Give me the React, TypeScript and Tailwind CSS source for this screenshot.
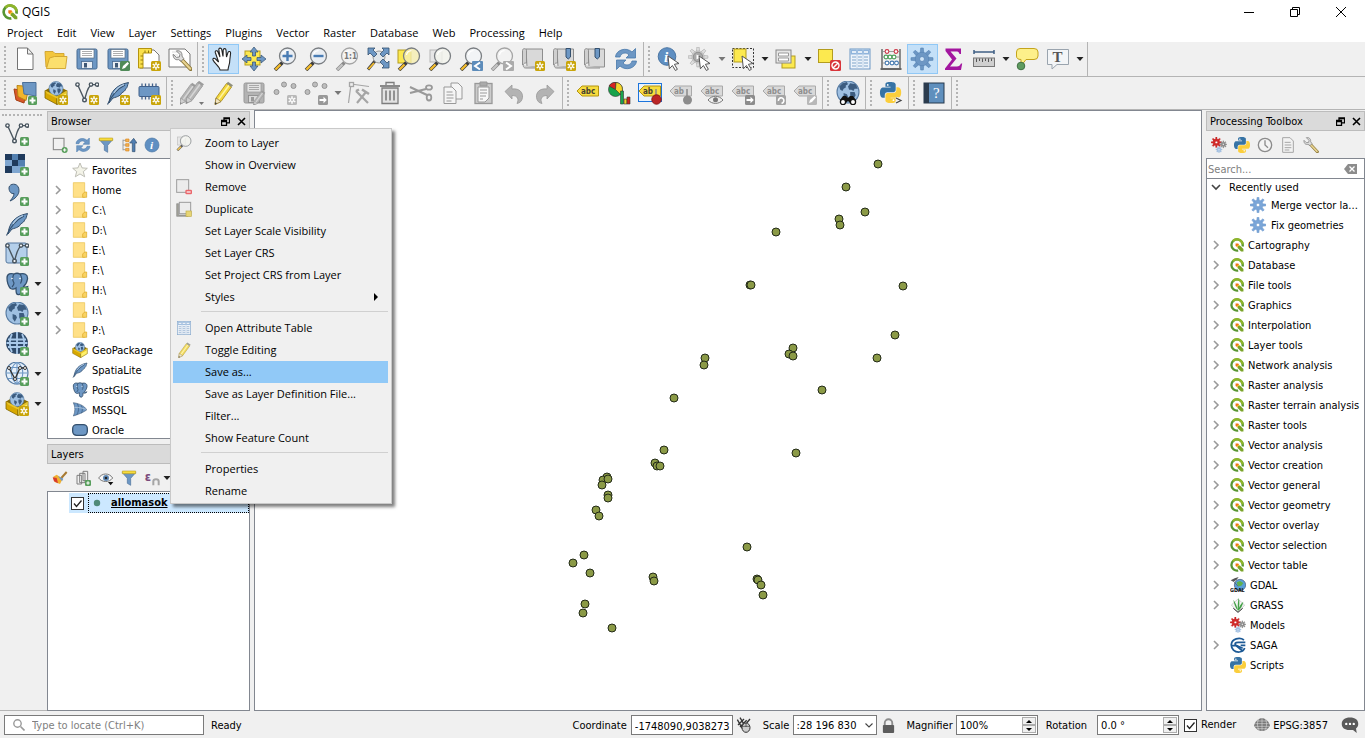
import React from 'react';
import type { ReactNode } from 'react';

const uiFont = "font-['DejaVu_Sans_Condensed','DejaVu_Sans',sans-serif]";
const menuFont = "font-['Open_Sans','Noto_Sans',sans-serif]";

/* ---------- icon building blocks, all drawn on a 24 x 24 grid ---------- */

function Svg({ children, className = 'size-6' }: { children: ReactNode; className?: string }) {
  return (
    <svg viewBox="0 0 24 24" className={`${className} shrink-0`} fill="none" aria-hidden="true">
      {children}
    </svg>
  );
}

const BLUE = '#6d97c4';
const NAVY = '#34506e';

function PlusBadge() {
  return (
    <g>
      <rect x="15" y="15" width="9" height="9" rx="1.5" fill="#589e5c" />
      <path d="M19.5 16.5v6M16.5 19.5h6" stroke="#fff" strokeWidth="2" />
    </g>
  );
}

function StarBadge({ fill = '#c9a50a' }: { fill?: string }) {
  return (
    <g>
      <rect x="14" y="14" width="10" height="10" rx="1.5" fill={fill} />
      <path d="M19 15.2v7.600M15.700 17.100l6.600 3.800M22.300 17.100l-6.600 3.800" stroke="#fff" strokeWidth="1.5" />
      <circle cx="19" cy="19" r="1" fill={fill} />
    </g>
  );
}

function ArrowBadge({ fill = '#8c8c8c' }: { fill?: string }) {
  return (
    <g>
      <rect x="14" y="14" width="10" height="10" rx="1.5" fill={fill} />
      <path d="M15.5 18h4v-2.2l3.3 3.2-3.3 3.2V20h-4z" fill="#fff" />
    </g>
  );
}

function Cursor() {
  return <path d="M11 9l11 7.5-4.6.8 3 5-2 1.2-3-5-3 3.3z" fill="#fff" stroke="#555" strokeWidth="1" />;
}

function Magnifier({ gray = false, glass = '#e8eef4' }: { gray?: boolean; glass?: string }) {
  return (
    <g>
      <path d="M9.5 15.500L2 23" stroke={gray ? '#8a8a8a' : '#3c3c3c'} strokeWidth="3.6" />
      <path d="M7.500 17.500l-5.100 5.100" stroke={gray ? '#c4c4c4' : '#f5bd2c'} strokeWidth="2.200" />
      <circle cx="14.5" cy="9" r="8" fill={glass} fillOpacity=".8" stroke={gray ? '#a4a4a4' : '#7a7e82'} strokeWidth="1.3" />
      <path d="M9.5 8a5.4 5.4 0 0 1 5-4.4" stroke="#fff" strokeWidth="1.2" />
    </g>
  );
}

function Gear({ cx = 12, cy = 12, r = 7, fill = BLUE, stroke = '#5683b4', hole = '#cfe4f7' }: { cx?: number; cy?: number; r?: number; fill?: string; stroke?: string; hole?: string }) {
  return (
    <g transform={`translate(${cx} ${cy}) scale(${r / 7})`}>
      {[0, 45, 90, 135, 180, 225, 270, 315].map((a) => (
        <path key={a} transform={`rotate(${a})`} d="M-1.8 -6L-1.300 -11h2.600L1.8 -6z" fill={fill} stroke={stroke} strokeWidth=".6" />
      ))}
      <circle r="6.800" fill={fill} stroke={stroke} strokeWidth=".6" />
      <circle r="2.500" fill={hole} stroke={stroke} strokeWidth=".8" />
    </g>
  );
}

function Pencil({ gray = false }: { gray?: boolean }) {
  return (
    <g>
      <path d="M5 17L15.500 2.500l5 3.500L10 20.500l-6 3z" fill={gray ? '#b4b4b4' : '#f3d83c'} stroke={gray ? '#9a9a9a' : '#b09020'} strokeWidth=".9" />
      <path d="M7.500 18.600L18 4.200" stroke={gray ? '#d6d6d6' : '#fff3a0'} strokeWidth="1.600" />
      <path d="M15.500 2.500L17 .8l5 3.400L20.500 6z" fill={gray ? '#9c9c9c' : '#8f8f7c'} />
      <path d="M5 17l5 3.500-6 3z" fill={gray ? '#d0d0d0' : '#f4e6c0'} stroke={gray ? '#9a9a9a' : '#86733a'} strokeWidth=".7" />
      <path d="M4.400 21l1.600 1.400L4 23.500z" fill={gray ? '#888' : '#333'} />
    </g>
  );
}

function Feather() {
  return (
    <g>
      <path d="M3 22C4 12 9 4 22.500 1.500C21 5 22 6 19.500 8c.5 1-2 3-4 4c0 2-4 4-8.500 5z" fill={BLUE} stroke={NAVY} strokeWidth="1" />
      <path d="M1.500 23.500C5 16 11 8 19 4" stroke={NAVY} strokeWidth="1.100" />
      <path d="M8 12C11 7 14 5 18 3.600" stroke="#b4cce4" strokeWidth="1.200" />
    </g>
  );
}

function Globe({ cx = 12, cy = 12, r = 10, grid = false }: { cx?: number; cy?: number; r?: number; grid?: boolean }) {
  return (
    <g transform={`translate(${cx} ${cy}) scale(${r / 10})`}>
      <circle r="10" fill={grid ? '#e6f0fa' : '#9fc0e2'} stroke="#587ca3" strokeWidth="1" />
      {grid ? (
        <path d="M-10 0h20M0-10v20M-8.500-5h17M-8.500 5h17M0-10c-7 5-7 15 0 20c7-5 7-15 0-20" stroke="#6d97c4" strokeWidth="1" />
      ) : (
        <path d="M-8-5l3-3 4-1 1 2-2 1 0 2-2 1-1 2-2-1zM-4 1l3 1 1 2-2 4-2-3zM2-8l5 1 2 4-3 0-1 2-2-1-2 0-1-3zM2 0l4 0 1 3-3 5-2-4z" fill="#3c5c80" />
      )}
    </g>
  );
}

function GeoBox() {
  return (
    <g>
      <path d="M1 9.500l10-6 12 6-10 6z" fill="#8a6d00" />
      <path d="M1 9.500l12 6v8L1 17z" fill="#d8a800" stroke="#806600" strokeWidth=".8" />
      <path d="M13 15.500l10-6v8l-10 6z" fill="#fff06a" stroke="#806600" strokeWidth=".8" />
      <Globe cx={12} cy={7.500} r={7} />
      <path d="M1 9.500l12 6 10-6-1 3-9 5-10-5z" fill="#e9c52a" />
    </g>
  );
}

function VectorLine({ color = '#4a5660' }: { color?: string }) {
  return (
    <g stroke={color} strokeWidth="1.400">
      <path d="M3 4.500L9.500 19C11 15 12 5 17 3.600h4.500" />
      <circle cx="2.500" cy="3.600" r="1.700" fill="#fff" />
      <circle cx="16" cy="3.600" r="1.700" fill="#fff" />
      <circle cx="22" cy="3.600" r="1.700" fill="#fff" />
      <circle cx="9.500" cy="19" r="1.800" fill="#fff" />
    </g>
  );
}

function Elephant() {
  return (
    <g>
      <path d="M2 6C2 1.500 6 1 9 2c2-1 4-1 6 0c4-1 8 0 7.500 5c-.5 3-2 6-4 7.500c1 1 3 .5 4 .2c-1 2-4 2.500-6 1.500c0 3 0 6-2.500 6.500C11 23 11 20 11 16c-2 1.500-3.500 1.500-5.500.5C3 13.500 2 9 2 6z" fill={BLUE} stroke={NAVY} strokeWidth="1.300" />
      <path d="M9 2c-2 3-1.500 7 0 9c0 2-1 3-2 4M15 2c2 3 2 7 .5 9.500" stroke={NAVY} strokeWidth="1.200" />
      <circle cx="7" cy="6.500" r=".8" fill="#fff" />
      <circle cx="15" cy="6.500" r=".8" fill="#fff" />
    </g>
  );
}

function Python() {
  return (
    <g>
      <path fill="#3673a5" d="M14.25.18l.9.2.73.26.59.3.45.32.34.34.25.34.16.33.1.3.04.26.02.2-.01.13V8.500l-.05.63-.13.55-.21.46-.26.38-.3.31-.33.25-.35.19-.35.14-.33.1-.3.07-.26.04-.21.02H8.77l-.69.05-.59.14-.5.22-.41.27-.33.32-.27.35-.2.36-.15.37-.1.35-.07.32-.04.27-.02.21v3.060H3.170l-.21-.03-.28-.07-.32-.12-.35-.18-.36-.26-.36-.36-.35-.46-.32-.59-.28-.73-.21-.88-.14-1.050-.05-1.230.06-1.220.16-1.040.24-.87.32-.71.36-.57.4-.44.42-.33.42-.24.4-.16.36-.1.32-.05.24-.01h.16l.06.01h8.160v-.83H6.180l-.01-2.750-.02-.37.05-.34.11-.31.17-.28.25-.26.31-.23.38-.2.44-.18.51-.15.58-.12.64-.1.71-.06.77-.04.84-.02 1.270.05z" />
      <path fill="#fbce3c" d="M21.04 6.110l.28.06.32.12.35.18.36.27.36.35.35.47.32.59.28.73.21.88.14 1.040.05 1.230-.06 1.230-.16 1.040-.24.86-.32.71-.36.57-.4.45-.42.33-.42.24-.4.16-.36.09-.32.05-.24.02-.16-.01h-8.220v.82h5.840l.01 2.760.02.36-.05.34-.11.31-.17.29-.25.25-.31.24-.38.2-.44.17-.51.15-.58.13-.64.09-.71.07-.77.04-.84.01-1.270-.04-1.070-.14-.9-.2-.73-.25-.59-.3-.45-.33-.34-.34-.25-.34-.16-.33-.1-.3-.04-.25-.02-.2.01-.13v-5.340l.05-.64.13-.54.21-.46.26-.38.3-.32.33-.24.35-.2.35-.14.33-.1.3-.06.26-.04.21-.02.13-.01h5.840l.69-.05.59-.14.5-.21.41-.28.33-.32.27-.35.2-.36.15-.36.1-.35.07-.32.04-.28.02-.21V6.070h2.090z" />
      <circle cx="8.800" cy="3.400" r="1" fill="#fff" />
      <circle cx="15.300" cy="20.600" r="1" fill="#fff" />
    </g>
  );
}

function QLogo() {
  return (
    <g>
      <path d="M21.500 14.500A9.700 9.700 0 1 0 14 21.500" stroke="#589632" strokeWidth="4" />
      <path d="M21.700 11A9.700 9.700 0 0 0 5 5.300" stroke="#8fb52b" strokeWidth="4" />
      <path d="M13 13h4l6 6v4h-4l-6-6z" fill="#7ba428" />
      <path d="M9.500 9.500h4.500l1.500 1.500-4 4-2-1.500z" fill="#ee7913" />
      <path d="M11.500 14.500l3.500-3.500 2 2h-2l-1.500 1.500v2z" fill="#f5c22c" />
    </g>
  );
}

function Tag({ gray = false, text = 'abc' }: { gray?: boolean; text?: string }) {
  return (
    <g>
      <path d="M6 5h16.500v10H6L1 10z" fill={gray ? '#d9d9d9' : '#f7dc3e'} stroke={gray ? '#a9a9a9' : '#b4940f'} strokeWidth="1" />
      <text x="5" y="13" fontSize="8" fontWeight="bold" fontFamily="DejaVu Sans Condensed, sans-serif" fill={gray ? '#8e8e8e' : '#454131'}>
        {text}
      </text>
    </g>
  );
}

function Scroll() {
  return (
    <g stroke="#8e8e8e" strokeWidth="1">
      <path d="M5 2h16.500v18H6z" fill="#d9d9d9" />
      <path d="M1.500 18V3.500c0-2.500 4-2.500 4 0V16H4.500c-3 0-3 5 0 5H17" fill="#cfcfcf" />
    </g>
  );
}

function Bookmark({ x }: { x: number }) {
  return <path d={`M${x} 1.500h4.500v8.500l-2.250 2-2.250-2z`} fill={BLUE} stroke={NAVY} strokeWidth="1" />;
}

function Floppy({ gray = false }: { gray?: boolean }) {
  return (
    <g>
      <rect x="2" y="2" width="20" height="20" rx="1.500" fill={gray ? '#b3b3b3' : BLUE} stroke={gray ? '#999' : '#476a92'} />
      <rect x="5" y="2.500" width="14" height="8.500" fill={gray ? '#e3e3e3' : '#fff'} stroke={gray ? '#999' : '#5c6f84'} strokeWidth=".7" />
      <path d="M7 4.500h10M7 6.500h10M7 8.500h10" stroke="#999" strokeWidth=".8" />
      <rect x="6.500" y="14.500" width="11" height="7" fill={gray ? '#d9d9d9' : '#e9eef4'} stroke={gray ? '#888' : '#476a92'} strokeWidth=".8" />
      <rect x="9" y="16" width="3" height="4.500" fill={gray ? '#999' : '#3f5876'} />
    </g>
  );
}

function Refresh() {
  return (
    <g fill={BLUE} stroke="#4878ab" strokeWidth=".8">
      <path d="M1.500 10C2 3 12-.5 18 5l3.500-3.500V11H12l3-3c-3-3.500-8-2-9 2z" />
      <path d="M22.500 14C22 21 12 24.500 6 19l-3.500 3.500V13H12l-3 3c3 3.500 8 2 9-2z" />
    </g>
  );
}

function Gears() {
  return (
    <g>
      <Gear cx={8} cy={8} r={5} fill="#d42a2a" stroke="#b41818" hole="#fff" />
      <Gear cx={18.500} cy={11} r={3.400} fill="#8c8c8c" stroke="#777" hole="#fff" />
      <Gear cx={12} cy={19} r={3} fill="#9fbfe4" stroke="#86a8d0" hole="#fff" />
    </g>
  );
}

function Table() {
  return (
    <g>
      <rect x="2" y="2" width="20" height="20" fill="#eef4fb" stroke="#6d97c4" />
      <rect x="2.500" y="2.500" width="19" height="5" fill="#8fb4dc" />
      <path d="M4 5h4M10 5h4M16 5h4" stroke="#fff" strokeWidth="1.500" />
      <path d="M4 10h4M10 10h4M16 10h4M4 13h4M10 13h4M16 13h4M4 16h4M10 16h4M16 16h4M4 19h4M10 19h4M16 19h4" stroke="#7fa3ca" strokeWidth="1.200" />
      <path d="M9 2v20M15 2v20" stroke="#b3cbe4" strokeWidth=".8" />
    </g>
  );
}

function Wrench() {
  return (
    <g>
      <path d="M11 11l10.500 11" stroke="#8b7637" strokeWidth="4.500" strokeLinecap="round" />
      <path d="M12 12l9 9.500" stroke="#e8d390" strokeWidth="2.500" strokeLinecap="round" />
      <path d="M5 1c4-1 7 2 6.500 6l2 3-3 3-3-2C3.500 12 1 9 1.500 5l3.500 3.500L8.500 8l.5-3z" fill="#ddd" stroke="#777" strokeWidth="1" />
    </g>
  );
}

function Funnel() {
  return (
    <g>
      <path d="M2 4h20l-7.500 8.500V23l-5-3v-7.500z" fill={BLUE} stroke="#4c719b" />
      <path d="M2 1.500h20v4H2z" fill="#f7dc3e" stroke="#b4940f" strokeWidth=".8" />
    </g>
  );
}

function Star() {
  return <path d="M12 1.500l3 7.300 8 .6-6 5 2 7.800-7-4.300-7 4.300 2-7.800-6-5 8-.6z" fill="#f3f3e8" stroke="#b5b5ac" strokeWidth="1.300" />;
}

function Dots() {
  return (
    <g fill="#bdbdbd" stroke="#8f8f8f" strokeWidth=".9">
      <circle cx="3.500" cy="11" r="2.500" />
      <circle cx="11" cy="3.500" r="2.500" />
      <circle cx="20.500" cy="5" r="2.500" />
    </g>
  );
}

const icons: Record<string, ReactNode> = {
  new: <path d="M4.500 1h10l5.500 6v15.500H4.500zM14.500 1v6H20" fill="#fff" stroke="#737373" />,
  open: (
    <g stroke="#cfa22b" strokeWidth=".9">
      <path d="M1 4.500h8l2 2h9V20H2z" fill="#f3c63c" />
      <path d="M2.500 21.500L5.500 11l5-1.500H23L21.500 21.500z" fill="#fbdf6d" />
    </g>
  ),
  save: <Floppy />,
  saveAs: (
    <g>
      <Floppy />
      <rect x="14" y="14" width="10" height="10" rx="1.500" fill="#4f8a58" />
      <path d="M16 22l1-3 4.500-4 1.500 1.500-4 4.500z" fill="#fff" />
    </g>
  ),
  layout: (
    <g>
      <path d="M3 3h14l5 5v13H3z" fill="#fff" stroke="#777" />
      <path d="M1.500 1.500h13v4.500H6v15H1.500z" fill="#fae04c" stroke="#b4940f" />
      <path d="M8 3.500v2.500M11.500 3.500v2.500M3.500 9H6M3.500 13H6M3.500 17H6" stroke="#947a10" />
      <StarBadge />
    </g>
  ),
  layoutManager: (
    <g>
      <path d="M1 2h16l5 5v13H1z" fill="#fff" stroke="#777" />
      <path d="M4 5h10M4 8h6" stroke="#ddd" />
      <g transform="translate(4 3) scale(.87)"><Wrench /></g>
    </g>
  ),
  hand: (
    <path d="M9 23c-.5-3.500-5.500-6.500-7-10c-.6-1.700 1.400-2.300 2.600-1l3 3L4.300 5.500C3.800 3.600 6.200 3 6.900 4.800L9 10L7.800 2.700C7.600.7 10.200.5 10.700 2.400L12 9.500L12.200 3c.2-1.900 2.700-1.800 2.800 0l.5 7l1.500-4.600c.7-1.600 2.800-1 2.600.8L18.800 13c0 4.500-1.500 6-1.800 10z" fill="#fff" stroke="#222" strokeWidth="1.100" />
  ),
  panSelection: (
    <g>
      <rect x="3" y="4" width="15" height="14" fill="#fce94f" stroke="#b39c1e" />
      <path d="M12 0l4 5h-2.500v4h-3V5H8zM12 24l-4-5h2.500v-4h3v4H16zM0 12l5-4v2.500h4v3H5V16zM24 12l-5 4v-2.500h-4v-3h4V8z" fill={BLUE} stroke={NAVY} strokeWidth=".7" />
    </g>
  ),
  zoomIn: (<g><Magnifier /><path d="M14.500 4v10M9.500 9h10" stroke="#497cb4" strokeWidth="2.400" /></g>),
  zoomOut: (<g><Magnifier /><path d="M9.500 9h10" stroke="#497cb4" strokeWidth="2.400" /></g>),
  zoomNative: (
    <g><Magnifier gray glass="#f3f3f3" />
      <text x="9" y="12" fontSize="8" fontWeight="bold" fontFamily="DejaVu Sans Condensed, sans-serif" fill="#777">1:1</text>
    </g>
  ),
  zoomFull: (
    <g><path d="M9 14L2 22.500" stroke="#444" strokeWidth="3" /><path d="M8 16l-5.500 6" stroke="#f5bd2c" strokeWidth="1.800" />
      <circle cx="13" cy="10" r="6" fill="#dfe5ea" stroke="#999" />
      <path d="M2 1h7L7 3l4 4-3 3-4-4-2 2zM23 1h-7l2 2-4 4 3 3 4-4 2 2zM23 21h-7l2-2-4-4 3-3 4 4 2-2z" fill={BLUE} stroke={NAVY} strokeWidth=".8" />
    </g>
  ),
  zoomSelection: (<g><rect x="1" y="3" width="13" height="13" fill="#fce94f" stroke="#b39c1e" /><Magnifier glass="#f6efb0" /></g>),
  zoomLayer: (<g><rect x="2" y="3" width="12" height="12" fill="#e6e6e6" stroke="#b5b5b5" /><Magnifier glass="#f4f5ee" /></g>),
  zoomLast: (<g><Magnifier glass="#f3f5f7" /><rect x="13" y="14" width="11" height="10" rx="1" fill="#5d8cba" /><path d="M21 15.500L16 19l5 3.500" stroke="#fff" strokeWidth="2" /></g>),
  zoomNext: (<g><Magnifier gray glass="#f3f3f3" /><rect x="13" y="14" width="11" height="10" rx="1" fill="#ababab" /><path d="M16 15.500l5 3.500-5 3.500" stroke="#fff" strokeWidth="2" /></g>),
  mapView: (<g><Scroll /><StarBadge /></g>),
  newBookmark: (<g><Scroll /><Bookmark x={14} /><StarBadge /></g>),
  bookmarks: (<g><Scroll /><Bookmark x={12} /></g>),
  refresh: <Refresh />,
  identify: (
    <g><circle cx="10" cy="9.500" r="8.800" fill="#5f8fc2" stroke="#4a75a3" />
      <text x="7" y="15" fontSize="15" fontStyle="italic" fontWeight="bold" fontFamily="Liberation Serif, serif" fill="#fff">i</text>
      <Cursor />
    </g>
  ),
  action: (<g><Gear cx={10} cy={10} r={6.300} fill="#dedede" stroke="#a2a2a2" hole="#cfcfcf" /><circle cx="10" cy="10" r="4.800" fill="#a8a8a8" stroke="#8c8c8c" /><path d="M8.500 7.500l4.500 2.500-4.500 2.500z" fill="#fff" /><Cursor /></g>),
  select: (<g><rect x="1.500" y="1.500" width="21" height="19" stroke="#333" strokeDasharray="2 1.500" /><rect x="3" y="2" width="12" height="13" fill="#fce94f" stroke="#b39c1e" /><Cursor /></g>),
  selectForm: (<g><rect x="8" y="9" width="13" height="12" fill="#fce94f" stroke="#b39c1e" /><rect x="2" y="3" width="15" height="13" fill="#e7e7e7" stroke="#888" /><path d="M4.500 6h10v3h-10zM4.500 11h10v3h-10z" fill="#fff" stroke="#999" /></g>),
  deselect: (<g><rect x="1.500" y="2.500" width="14" height="13" fill="#fce94f" stroke="#b39c1e" /><rect x="13" y="13" width="11" height="11" rx="1.500" fill="#d8343a" /><circle cx="18.500" cy="18.500" r="3.500" stroke="#fff" strokeWidth="1.400" /><path d="M16 21l5-5" stroke="#fff" strokeWidth="1.400" /></g>),
  table: <Table />,
  abacus: (
    <g><path d="M3 2v19M21 2v19" stroke="#555" strokeWidth="1.300" /><path d="M1.500 22h21" stroke="#666" strokeWidth="2" /><path d="M3 4.500h18M3 10h18M3 16h18" stroke="#888" strokeWidth=".8" />
      <g fill="#fff" strokeWidth="1.100"><g stroke="#cc3344"><circle cx="8" cy="4.500" r="1.900" /><circle cx="17" cy="4.500" r="1.900" /></g><g stroke="#4e9e5a"><circle cx="7" cy="10" r="1.900" /><circle cx="11" cy="10" r="1.900" /><circle cx="15" cy="10" r="1.900" /></g><g stroke="#477ab0"><circle cx="8" cy="16" r="1.900" /><circle cx="13" cy="16" r="1.900" /><circle cx="17.500" cy="16" r="1.900" /></g></g>
    </g>
  ),
  gear: <Gear />,
  sigma: <path d="M4.500 1.500h15.500v5.500h-1.500c-.5-2-1.500-2.500-3.500-2.500H9.500l6 7-6.500 8h7c2 0 3-1 4-3h1.200L20 23H4v-1.500l7-9L4.500 4z" fill="#a3169f" />,
  measure: (<g><path d="M2 5h20M2 3v4M22 3v4" stroke="#3f5f84" strokeWidth="1.500" /><rect x="1.500" y="11" width="21" height="8.500" fill="#cfcfcf" stroke="#777" /><path d="M4.500 11.500v3.500M7.500 11.500v2.500M10.500 11.500v3.500M13.500 11.500v2.500M16.500 11.500v3.500M19.500 11.500v2.500" stroke="#555" /></g>),
  tips: (<g><path d="M5 1.500h14q4 0 4 3.500v4q0 3.500-4 3.500h-8L6 19v-6.500Q1.500 12.500 1.500 9V5Q1.500 1.500 5 1.500z" fill="#fdf08a" stroke="#c4a41c" /><circle cx="6" cy="19" r="3.800" fill="#5f9b60" stroke="#407043" /></g>),
  textAnno: (<g><path d="M1.500 2.500h21v15H11L6 22v-4.500H1.500z" fill="#f3f5f7" stroke="#9aa4ae" /><text x="6.500" y="15" fontSize="15" fontWeight="bold" fontFamily="Liberation Serif, serif" fill="#555">T</text></g>),
  dataSource: (<g><path d="M1 8l12 2-2 12-8-3z" fill="#da5a28" stroke="#a33d14" /><path d="M4 4.500l12 1-3 14-8-4z" fill="#f2b52c" stroke="#b88414" /><path d="M9.500 1.500h13.500v13.500l-12-2z" fill={BLUE} stroke="#4b6f97" /><PlusBadge /></g>),
  newGpkg: (<g><GeoBox /><StarBadge /></g>),
  newShape: (<g><VectorLine /><StarBadge /></g>),
  newSpatialite: (<g><Feather /><StarBadge /></g>),
  newMem: (<g><path d="M5 2.500v16M8.500 2.500v16M12 2.500v16M15.500 2.500v16M19 2.500v16" stroke="#41608a" strokeWidth="1.300" /><rect x="2" y="5.500" width="20" height="10" rx="1" fill={BLUE} stroke="#41608a" /><StarBadge /></g>),
  edits: (<g><g transform="translate(-4 1) scale(.95)"><Pencil gray /></g><g transform="translate(2 -1)"><Pencil gray /></g><path d="M19 21h5l-2.500 3z" fill="#777" /></g>),
  pencil: <Pencil />,
  saveEdits: (<g><Floppy gray /><g transform="translate(9 9) scale(.65)"><Pencil gray /></g></g>),
  addPoint: (<g><Dots /><StarBadge fill="#b9b9b9" /></g>),
  movePoint: (<g><Dots /><ArrowBadge fill="#999" /></g>),
  vertex: (<g stroke="#a5a5a5"><path d="M4 3L1.500 22M4 3l18 2.500" strokeWidth="1.200" /><rect x="2.500" y="1.500" width="4" height="4" fill="#eee" strokeWidth="1.300" /><path d="M10 22l9-11M9 10l12 12" strokeWidth="2.200" /><path d="M15 8.500l7 4.500M9 10l3-1.500" strokeWidth="2.500" /></g>),
  trash: (<g stroke="#7d7d7d"><path d="M4 7h16v15.500H4z" fill="#e2e2e2" strokeWidth="1.300" /><path d="M8 9.500v10M12 9.500v10M16 9.500v10" strokeWidth="1.600" /><path d="M2 5h20" strokeWidth="1.800" /><path d="M8 4V1.500h8V4" strokeWidth="1.300" /></g>),
  cut: (<g stroke="#999"><path d="M1 6l17 8M1 12l16-4" strokeWidth="2" /><ellipse cx="20" cy="6.500" rx="3" ry="2.200" strokeWidth="1.800" /><ellipse cx="20" cy="16.500" rx="2.300" ry="3" strokeWidth="1.800" /></g>),
  copy: (<g fill="#f5f5f5" stroke="#999"><path d="M11 2h7l4 4v12H11z" /><path d="M4 6h8l4 4v12.500H4z" /><path d="M6.500 11h6M6.500 14h7M6.500 17h7M6.500 20h5" /></g>),
  paste: (<g stroke="#999"><rect x="4" y="2.500" width="17" height="20" fill="#ccc" strokeWidth="1.300" /><path d="M7 6h11v11l-4 4H7z" fill="#f7f7f7" /><path d="M9 1h7v4H9z" fill="#aaa" /><path d="M9 9h7M9 12h7M9 15h6M9 18h3" /></g>),
  undo: <path d="M3 10.500L10 4v4c8-1 11 4 10.500 8.500C20 20 18 22 15 22.500c2-4 1-8-5-8V18z" fill="#b3b3b3" stroke="#999" strokeWidth=".8" />,
  redo: <path d="M21 10.500L14 4v4C6 7 3 12 3.500 16.500C4 20 6 22 9 22.500c-2-4-1-8 5-8V18z" fill="#b3b3b3" stroke="#999" strokeWidth=".8" />,
  label: <Tag />,
  diagram: (<g stroke="#333" strokeWidth=".6"><circle cx="8.500" cy="8.500" r="7" fill="#17a34a" /><path d="M8.500 8.500L2 5a7 7 0 0 1 7-3.500z" fill="#d82222" /><path d="M8.500 8.500L9 1.500a7 7 0 0 1 4.500 12z" fill="#f6d62c" /><path d="M13.500 10h3v13h-3z" fill="#19a24c" /><path d="M17 18h3v5h-3z" fill="#f0cf2a" /><path d="M20 16h3v7h-3z" fill="#cc2020" /></g>),
  labelPin: (<g><rect x=".5" y="2.500" width="23" height="18" fill="#eaf3fc" stroke="#1c74dc" /><Tag text="ab" /><path d="M18 15V8" stroke="#888" strokeWidth="1.500" /><circle cx="18.500" cy="18.500" r="4.700" fill="#bb2525" stroke="#8c1616" /></g>),
  labelPinGray: (<g><Tag gray text="ab" /><path d="M18 15V8" stroke="#888" strokeWidth="1.500" /><circle cx="18.500" cy="19" r="4.500" fill="#8c8c8c" /></g>),
  labelEye: (<g><Tag gray /><path d="M8 19c4-5 11-5 15 0c-4 4.500-11 4.500-15 0z" fill="#eee" stroke="#777" /><circle cx="15.500" cy="18.800" r="2.500" fill="#777" /></g>),
  labelMove: (<g><Tag gray /><ArrowBadge /></g>),
  labelRotate: (<g><Tag gray /><rect x="14" y="14" width="10" height="10" rx="1.500" fill="#a4a4a4" /><path d="M16.500 20a2.700 2.700 0 1 1 3 2.200" stroke="#fff" strokeWidth="1.600" /></g>),
  labelEdit: (<g><Tag gray /><rect x="14" y="14" width="10" height="10" rx="1.500" fill="#b8b8b8" /><path d="M16 22l1-3 4.500-4 1.500 1.500-4 4.500z" fill="#fff" /></g>),
  metasearch: (<g><Globe cx={12} cy={11} r={11} /><path d="M4 19l3-4h3l1.500 1.500h1L14 15h3l3 4v2.500h-6.500L12 20l-1.500 1.500H4z" fill="#111" /><circle cx="7" cy="21" r="2.600" fill="#fff" stroke="#111" strokeWidth="1.300" /><circle cx="17" cy="21" r="2.600" fill="#fff" stroke="#111" strokeWidth="1.300" /></g>),
  console: (<g><g transform="translate(1 1) scale(.88)"><Python /></g><path d="M17 17l5 2.500-5 2.500" stroke="#f0f0f0" strokeWidth="3" /><path d="M17 17l5 2.500-5 2.500" stroke="#444" strokeWidth="1.200" /></g>),
  help: (<g><rect x="2" y="2" width="20" height="20" fill="#5f8fbd" stroke="#26384c" /><rect x="2" y="2" width="5" height="20" fill="#2b3b4d" /><text x="11" y="17" fontSize="15" fontFamily="Liberation Serif, serif" fill="#fff">?</text></g>),
  addVector: (<g><VectorLine /><PlusBadge /></g>),
  addRaster: (<g><path d="M0 2h20v19H0z" fill="#7fa6d0" /><path d="M0 2h7v6H0zM13 2h7v6h-7zM7 8h6v6H7zM0 14h7v7H0z" fill="#1f3a5c" /><path d="M7 2h6v6H7zM13 8h7v6h-7z" fill="#5380b0" /><PlusBadge /></g>),
  addDelimited: (<g><path d="M4 6C4 1 14 0 14 8.500C14 13 10 17 5 19c2.500-3 4-5 4-7.500C6 12 4 9.500 4 6z" fill={BLUE} stroke={NAVY} /><PlusBadge /></g>),
  addSpatialite: (<g><Feather /><PlusBadge /></g>),
  addVirtual: (<g><rect x="1" y="1" width="21" height="20" rx="2" fill="#b4cfea" stroke="#5679a0" /><VectorLine /><PlusBadge /></g>),
  addPostgis: (<g><Elephant /><PlusBadge /></g>),
  addWms: (<g><Globe cx={12} cy={11} r={11} /><PlusBadge /></g>),
  addWcs: (<g><circle cx="12" cy="11" r="11" fill="#2e4a6a" /><path d="M3 7.500h18M1.500 11h21M3 15h18M12 0v22M7 2c-3 5-3 13 0 18M17 2c3 5 3 13 0 18" stroke="#a9c9ea" strokeWidth="1.800" /><PlusBadge /></g>),
  addWfs: (<g><Globe cx={12} cy={11} r={11} grid /><path d="M4 6l6 11 5-11h5" stroke="#333" strokeWidth="1.400" /><g fill="#fff" stroke="#333"><circle cx="4" cy="6" r="1.500" /><circle cx="15" cy="6" r="1.500" /><circle cx="20" cy="6" r="1.500" /><circle cx="10" cy="17" r="1.500" /></g><PlusBadge /></g>),
  gpkg: <GeoBox />,
  addLayer: (<g><rect x="2" y="2" width="16" height="17" fill="#f0f0f0" stroke="#888" strokeWidth="1.600" /><circle cx="19" cy="19.500" r="4.500" fill="#589e5c" /><path d="M19 17v5M16.500 19.500h5" stroke="#fff" strokeWidth="1.500" /></g>),
  funnel: <Funnel />,
  collapse: (<g><path d="M3 4v16M3 5h5M3 12h4M3 19h4" stroke="#9a9a9a" strokeWidth="1.400" /><path d="M7 3h5v4H7zM7 10h5v4H7zM7 17h5v4H7z" fill="#f5b050" stroke="#d98a20" /><path d="M17 22V9h-4l6-7 5 7h-3v13z" fill="#517fb2" stroke={NAVY} /></g>),
  info: (<g><circle cx="12" cy="12" r="10.500" fill="#5f8fc2" stroke="#4a75a3" /><text x="9" y="18" fontSize="17" fontStyle="italic" fontWeight="bold" fontFamily="Liberation Serif, serif" fill="#fff">i</text></g>),
  star: <Star />,
  folder: (<g><path d="M2 1h17v22H2z" fill="#ffe087" stroke="#e9c04c" /><path d="M19 15h3v8h-6v-5z" fill="#f9d264" stroke="#dba820" /></g>),
  feather: <Feather />,
  elephant: <Elephant />,
  mssql: (<g><path d="M2 1c7 1 17 4 20 11c-4 3-13 7-20 9c3-6 3-14 0-20z" fill={BLUE} stroke={NAVY} strokeWidth=".8" /><path d="M8 2.500c3 6 2 12-1 17M14 5c2 5 2 8 0 12" stroke="#3d5f86" strokeWidth="1.200" /><path d="M3.500 8c7 0 12 1 17 3" stroke="#c6d8ea" /></g>),
  oracle: <rect x="1" y="4" width="22" height="16" rx="6" fill="#6d97c4" stroke="#34506e" strokeWidth="2" />,
  brush: (<g><path d="M14 12l8-9" stroke="#a87a32" strokeWidth="3" /><path d="M2 10l5-3 9 6-4 8-8-3z" fill="#f0b030" /><path d="M1 11l6 1 2 8-6-3z" fill="#d83b2c" /><path d="M9 9l8 4-2 4z" fill="#6b96c6" /></g>),
  group: (<g><path d="M3 8h7v13H3zM7 5h8v14H7zM12 2h7v14h-7z" fill="#f0f0f0" stroke="#777" strokeWidth="1.400" /><rect x="15" y="15" width="9" height="9" rx="2" fill="#589e5c" /><path d="M19.500 17v5M17 19.500h5" stroke="#fff" strokeWidth="1.600" /></g>),
  eye: (<g><path d="M1 12C6 4 17 4 22 12C17 19 6 19 1 12z" fill="#f7f7f7" stroke="#777" strokeWidth="1.500" /><circle cx="12" cy="12" r="4.500" fill="#5f88b4" /><circle cx="12" cy="12" r="2" fill="#222" /><path d="M15 18h8l-4 5z" fill="#111" /></g>),
  epsilon: (<g><text x="1" y="16" fontSize="19" fontWeight="bold" fontFamily="DejaVu Sans Condensed, sans-serif" fill="#7a4a7c">ε</text><path d="M14 23v-6q0-3 4-3t4 3v6" stroke="#a5a5a5" strokeWidth="3" /></g>),
  gears: <Gears />,
  python: <Python />,
  clock: (<g stroke="#8b8b8b" strokeWidth="2"><circle cx="12" cy="12" r="10" fill="#f3f3f3" /><path d="M12 5v7l4.500 4" /></g>),
  doc: (<g stroke="#a5a5a5" strokeWidth="1.500"><path d="M4 1h11l5 5v17H4z" fill="#f2f2f2" /><path d="M7 8h9M7 12h10M7 16h10M7 19.500h7" /></g>),
  wrench: <Wrench />,
  qgis: <QLogo />,
  gdal: (<g><circle cx="15" cy="12" r="8.500" fill="#5aa0d8" stroke="#457" /><path d="M10 8l5-2 5 3-3 4-5 1z" fill="#5fb04c" /><path d="M1 5l6-3 6-2-3 4-5 3z" fill="#555" /><path d="M5 6l7 8" stroke="#555" /><text x="0" y="22" fontSize="8" fontWeight="bold" fontFamily="DejaVu Sans Condensed, sans-serif" fill="#111">GDAL</text></g>),
  grass: (<g><path d="M2 12l10-9 10 9-10 11z" fill="#f5f5f5" stroke="#bbb" /><path d="M12 21C11 14 8 8 5 4c1 6 3 12 7 17zM12 21C11 13 12 6 13 1c2 6 1 14-1 20zM12 21c1-6 4-11 8-14c-1 6-4 11-8 14z" fill="#43a047" /><path d="M5 17l7 6 7-6" stroke="#111" strokeWidth="1.300" /></g>),
  saga: (<g stroke="#1d5a96" strokeWidth="2.600"><path d="M21 4.500C14-.5 3 3 2 11c-.5 7 5 12 12 11.500c4-.5 7-3 8-6" /><path d="M23 8H12c-4 0-5 2-4 4l11 5" /><path d="M3 13h6l10 8M23 12.500h-7" /></g>),
  removeLayer: (<g><rect x="1" y="1" width="18" height="19" fill="#ececec" stroke="#888" strokeWidth="1.500" /><rect x="14" y="16" width="10" height="7" rx="2" fill="#e9444a" /><path d="M16 19.500h6" stroke="#fff" strokeWidth="1.800" /></g>),
  duplicate: (<g><path d="M1 4h3v17h14v2H1z" fill="#8c8c80" stroke="#777" /><rect x="5" y="2" width="17" height="17" fill="#ececec" stroke="#888" strokeWidth="1.500" /><rect x="15" y="15" width="8" height="8" fill="#e6cf57" stroke="#b39c1e" /></g>),
  mouse: (<g stroke="#333"><path d="M2 4l8 14M6 1l9 15M12 3l-9 9M16 5L6 15M21 3l-5 6" strokeWidth="2" /><ellipse cx="15" cy="16" rx="6" ry="7" fill="#ccc" strokeWidth="1.500" /><path d="M15 9v6M10 14h10" /></g>),
  lock: (<g><path d="M6 12V8a6 6 0 0 1 12 0v4" stroke="#8c8c8c" strokeWidth="3" /><rect x="3" y="11" width="18" height="13" rx="1.500" fill="#5c5c5c" /></g>),
  crs: (<g><path d="M0 13C2 6 7 2 12 2s10 4 12 11c-3 5-7 8-12 8S3 18 0 13z" fill="#787878" /><path d="M2 10h20M1 14h22M12 2v19M7 3C4 9 5 16 8 20M17 3c3 6 2 13-1 17M4 6h16M4 17.500h16" stroke="#ddd" strokeWidth=".9" /></g>),
  bubble: (<g><path d="M12 2C5 2 1 5.500 1 10.500S5 18.500 11 18.500l5 .3 5 4-1-6c2-1.500 3-3.500 3-6C23 5 19 2 12 2z" fill="#5a5a5a" /><circle cx="7" cy="10.500" r="1.600" fill="#fff" /><circle cx="12" cy="10.500" r="1.600" fill="#fff" /><circle cx="17" cy="10.500" r="1.600" fill="#fff" /></g>),
};

function Icon({ name, className }: { name: string; className?: string }) {
  return <Svg className={className}>{icons[name]}</Svg>;
}

/* ---------- toolbars ---------- */

type Tool = { id: string; label: string; active?: boolean; menu?: 'dark' | 'light' };

const fileTools: Tool[] = [
  { id: 'new', label: 'New Project' },
  { id: 'open', label: 'Open Project' },
  { id: 'save', label: 'Save Project' },
  { id: 'saveAs', label: 'Save Project As' },
  { id: 'layout', label: 'New Print Layout' },
  { id: 'layoutManager', label: 'Layout Manager' },
];

const navTools: Tool[] = [
  { id: 'hand', label: 'Pan Map', active: true },
  { id: 'panSelection', label: 'Pan to Selection' },
  { id: 'zoomIn', label: 'Zoom In' },
  { id: 'zoomOut', label: 'Zoom Out' },
  { id: 'zoomNative', label: 'Zoom to Native Resolution' },
  { id: 'zoomFull', label: 'Zoom Full' },
  { id: 'zoomSelection', label: 'Zoom to Selection' },
  { id: 'zoomLayer', label: 'Zoom to Layer' },
  { id: 'zoomLast', label: 'Zoom Last' },
  { id: 'zoomNext', label: 'Zoom Next' },
  { id: 'mapView', label: 'New Map View' },
  { id: 'newBookmark', label: 'New Bookmark' },
  { id: 'bookmarks', label: 'Show Bookmarks' },
  { id: 'refresh', label: 'Refresh' },
];

const attributeTools: Tool[] = [
  { id: 'identify', label: 'Identify Features' },
  { id: 'action', label: 'Run Feature Action', menu: 'light' },
  { id: 'select', label: 'Select Features', menu: 'dark' },
  { id: 'selectForm', label: 'Select by Form', menu: 'dark' },
  { id: 'deselect', label: 'Deselect Features' },
  { id: 'table', label: 'Open Attribute Table' },
  { id: 'abacus', label: 'Field Calculator' },
  { id: 'gear', label: 'Processing Toolbox', active: true },
  { id: 'sigma', label: 'Statistical Summary' },
  { id: 'measure', label: 'Measure', menu: 'dark' },
  { id: 'tips', label: 'Map Tips' },
  { id: 'textAnno', label: 'Text Annotation', menu: 'dark' },
];

const createTools: Tool[] = [
  { id: 'dataSource', label: 'Data Source Manager' },
  { id: 'newGpkg', label: 'New GeoPackage Layer' },
  { id: 'newShape', label: 'New Shapefile Layer' },
  { id: 'newSpatialite', label: 'New SpatiaLite Layer' },
  { id: 'newMem', label: 'New Scratch Layer' },
];

const editTools: Tool[] = [
  { id: 'edits', label: 'Current Edits' },
  { id: 'pencil', label: 'Toggle Editing' },
  { id: 'saveEdits', label: 'Save Layer Edits' },
  { id: 'addPoint', label: 'Add Feature' },
  { id: 'movePoint', label: 'Move Feature', menu: 'light' },
  { id: 'vertex', label: 'Vertex Tool' },
  { id: 'trash', label: 'Delete Selected' },
  { id: 'cut', label: 'Cut Features' },
  { id: 'copy', label: 'Copy Features' },
  { id: 'paste', label: 'Paste Features' },
  { id: 'undo', label: 'Undo' },
  { id: 'redo', label: 'Redo' },
];

const labelTools: Tool[] = [
  { id: 'label', label: 'Layer Labeling' },
  { id: 'diagram', label: 'Layer Diagrams' },
  { id: 'labelPin', label: 'Highlight Pinned Labels' },
  { id: 'labelPinGray', label: 'Pin Labels' },
  { id: 'labelEye', label: 'Show Labels' },
  { id: 'labelMove', label: 'Move Label' },
  { id: 'labelRotate', label: 'Rotate Label' },
  { id: 'labelEdit', label: 'Change Label' },
];

const sourceTools: Tool[] = [
  { id: 'addVector', label: 'Add Vector Layer' },
  { id: 'addRaster', label: 'Add Raster Layer' },
  { id: 'addDelimited', label: 'Add Delimited Text Layer' },
  { id: 'addSpatialite', label: 'Add SpatiaLite Layer' },
  { id: 'addVirtual', label: 'Add Virtual Layer' },
  { id: 'addPostgis', label: 'Add PostGIS Layer', menu: 'dark' },
  { id: 'addWms', label: 'Add WMS Layer', menu: 'dark' },
  { id: 'addWcs', label: 'Add WCS Layer' },
  { id: 'addWfs', label: 'Add WFS Layer', menu: 'dark' },
  { id: 'newGpkg', label: 'New Layer', menu: 'dark' },
];

function Caret({ tone = 'dark' }: { tone?: 'dark' | 'light' }) {
  return (
    <svg viewBox="0 0 8 4" className="h-1 w-2 shrink-0" aria-hidden="true">
      <path d="M.5 0h7L4 4z" fill={tone === 'dark' ? '#222' : '#777'} />
    </svg>
  );
}

function ToolGroup({ tools }: { tools: Tool[] }) {
  return (
    <div role="toolbar" className="flex items-center border-r border-[#b4b4b4] pr-px">
      <span className="mr-1 ml-1 h-[26px] w-[2px] border-r-2 border-dotted border-[#b4b4b4]" />
      {tools.map((t) => (
        <div key={t.id} className="flex items-center">
          <button
            aria-label={t.label}
            className={`flex h-[30px] w-[31px] items-center justify-center pr-px ${t.active ? 'border border-[#90c8f6] bg-[#c4e0f8]' : ''}`}
          >
            <Icon name={t.id} />
          </button>
          {t.menu && (
            <button aria-label={`${t.label} options`} className="flex h-6 w-3 items-center justify-center">
              <Caret tone={t.menu} />
            </button>
          )}
        </div>
      ))}
    </div>
  );
}

/* ---------- docks ---------- */

function DockTitle({ title }: { title: string }) {
  return (
    <header className="flex h-5 shrink-0 items-center border border-[#bcbcbc] bg-[#dadada] pl-[3px]">
      <h2 className="flex-1 pt-0.5">{title}</h2>
      <button aria-label={`Float ${title}`} className="flex size-4 items-center justify-center">
        <svg viewBox="0 0 9 9" className="size-[9px]" fill="none" aria-hidden="true">
          <path d="M.5 3.500h5v5h-5zM.5 4.500h5M3 3V.8h5.500v5H6M3 1.500h5.500" stroke="#000" strokeWidth="1.300" />
        </svg>
      </button>
      <button aria-label={`Close ${title}`} className="flex size-4 items-center justify-center">
        <svg viewBox="0 0 9 9" className="size-[9px]" fill="none" aria-hidden="true">
          <path d="M1 1l7 7M8 1L1 8" stroke="#000" strokeWidth="1.600" />
        </svg>
      </button>
    </header>
  );
}

function DockTools({ tools }: { tools: { id: string; label: string }[] }) {
  return (
    <div className="flex h-[27px] shrink-0 items-center pl-px">
      {tools.map((t) => (
        <button key={t.label} aria-label={t.label} className="flex h-6 w-[23px] shrink-0 items-center justify-center">
          <Icon name={t.id} className="size-4" />
        </button>
      ))}
    </div>
  );
}

function Chevron({ open = false }: { open?: boolean }) {
  return (
    <svg viewBox="0 0 10 10" className="size-[10px]" fill="none" aria-hidden="true">
      {open ? <path d="M1 3l4 4 4-4" stroke="#444" strokeWidth="1.600" /> : <path d="M3 1l4 4-4 4" stroke="#9a9a9a" strokeWidth="1.600" />}
    </svg>
  );
}

type Node = { label: string; icon: string; leaf?: boolean };

const browserNodes: Node[] = [
  { label: 'Favorites', icon: 'star', leaf: true },
  { label: 'Home', icon: 'folder' },
  { label: 'C:\\', icon: 'folder' },
  { label: 'D:\\', icon: 'folder' },
  { label: 'E:\\', icon: 'folder' },
  { label: 'F:\\', icon: 'folder' },
  { label: 'H:\\', icon: 'folder' },
  { label: 'I:\\', icon: 'folder' },
  { label: 'P:\\', icon: 'folder' },
  { label: 'GeoPackage', icon: 'gpkg', leaf: true },
  { label: 'SpatiaLite', icon: 'feather', leaf: true },
  { label: 'PostGIS', icon: 'elephant', leaf: true },
  { label: 'MSSQL', icon: 'mssql', leaf: true },
  { label: 'Oracle', icon: 'oracle', leaf: true },
];

const algorithmGroups = [
  'Cartography', 'Database', 'File tools', 'Graphics', 'Interpolation', 'Layer tools', 'Network analysis',
  'Raster analysis', 'Raster terrain analysis', 'Raster tools', 'Vector analysis', 'Vector creation',
  'Vector general', 'Vector geometry', 'Vector overlay', 'Vector selection', 'Vector table',
];

const toolboxNodes: Node[] = [
  ...algorithmGroups.map((label) => ({ label, icon: 'qgis' })),
  { label: 'GDAL', icon: 'gdal' },
  { label: 'GRASS', icon: 'grass' },
  { label: 'Models', icon: 'gears', leaf: true },
  { label: 'SAGA', icon: 'saga' },
  { label: 'Scripts', icon: 'python', leaf: true },
];

function TreeRow({ node }: { node: Node }) {
  return (
    <li className="flex h-5 items-center whitespace-nowrap">
      <span className="flex w-[22px] shrink-0 items-center justify-start pl-[3px]">
        {!node.leaf && (
          <button aria-label={`Expand ${node.label}`}>
            <Chevron />
          </button>
        )}
      </span>
      <Icon name={node.icon} className={node.icon === 'qgis' ? 'size-[14px]' : 'size-4'} />
      <span className="ml-1 pt-0.5">{node.label}</span>
    </li>
  );
}

/* ---------- context menu ---------- */

type MenuEntry = { label: string; icon?: string; sub?: boolean; hot?: boolean } | null;

const contextMenu: MenuEntry[] = [
  { label: 'Zoom to Layer', icon: 'zoomLayer' },
  { label: 'Show in Overview' },
  { label: 'Remove', icon: 'removeLayer' },
  { label: 'Duplicate', icon: 'duplicate' },
  { label: 'Set Layer Scale Visibility' },
  { label: 'Set Layer CRS' },
  { label: 'Set Project CRS from Layer' },
  { label: 'Styles', sub: true },
  null,
  { label: 'Open Attribute Table', icon: 'table' },
  { label: 'Toggle Editing', icon: 'pencil' },
  { label: 'Save as...', hot: true },
  { label: 'Save as Layer Definition File...' },
  { label: 'Filter...' },
  { label: 'Show Feature Count' },
  null,
  { label: 'Properties' },
  { label: 'Rename' },
];

function ContextMenu() {
  return (
    <div
      role="menu"
      className={`absolute top-[128px] left-[170px] z-10 w-[222px] border border-[#c9c9c9] bg-[#f0f0f0] px-[2px] pt-[3px] pb-px text-[11px] shadow-[3px_3px_3px_rgba(0,0,0,0.5)] ${menuFont}`}
    >
      {contextMenu.map((entry, i) =>
        entry === null ? (
          <hr key={i} className="mt-[3px] mr-px mb-[5px] ml-7 border-t border-[#d0d0d0]" />
        ) : (
          <button
            key={entry.label}
            role="menuitem"
            className={`flex h-[22px] w-[215px] items-center pr-[10px] pl-[3px] text-left ${entry.hot ? 'bg-[#91c9f7]' : ''}`}
          >
            <span className="w-[29px] shrink-0">{entry.icon && <Icon name={entry.icon} className="size-4 opacity-80" />}</span>
            <span className="flex-1 whitespace-nowrap">{entry.label}</span>
            {entry.sub && (
              <svg viewBox="0 0 4 8" className="h-2 w-1" aria-hidden="true">
                <path d="M0 0v8l4-4z" fill="#000" />
              </svg>
            )}
          </button>
        ),
      )}
    </div>
  );
}

/* ---------- map ---------- */

const stations: [number, number][] = [
  [878, 164], [846, 187], [865, 212], [839, 219], [840, 225], [776, 232], [750, 285], [751, 285], [903, 286],
  [895, 335], [877, 358], [793, 348], [789, 354], [793, 356], [705, 358], [704, 365], [822, 390], [674, 398],
  [796, 453], [664, 450], [655, 463], [657, 466], [660, 466], [607, 477], [603, 480], [608, 479], [602, 485],
  [608, 495], [608, 498], [596, 510], [599, 516], [584, 555], [573, 563], [590, 573], [653, 577], [654, 581],
  [585, 604], [583, 613], [612, 628], [747, 547], [757, 579], [758, 580], [761, 585], [763, 595],
];

function MapCanvas() {
  return (
    <main className="min-w-0 flex-1 overflow-hidden border border-[#828790] bg-white">
      <svg width="946" height="598" viewBox="255 111 946 598" aria-label="Map canvas" className="block">
        {stations.map(([x, y], i) => (
          <circle key={i} cx={x} cy={y} r="4" fill="#8b9a46" stroke="#232a18" strokeWidth="1" />
        ))}
      </svg>
    </main>
  );
}

/* ---------- status bar ---------- */

function CheckBox({ label, hideLabel = false }: { label: string; hideLabel?: boolean }) {
  return (
    <label className="flex shrink-0 items-center gap-1">
      <span className="grid size-[13px] place-items-center">
        <input
          type="checkbox"
          defaultChecked
          aria-label={hideLabel ? label : undefined}
          className="col-start-1 row-start-1 size-[13px] appearance-none border border-[#333] bg-white"
        />
        <svg viewBox="0 0 13 13" className="pointer-events-none col-start-1 row-start-1 size-[13px]" fill="none" aria-hidden="true">
          <path d="M3 6.500l2.500 3L10.500 3.500" stroke="#222" strokeWidth="1.300" />
        </svg>
      </span>
      {!hideLabel && <span>{label}</span>}
    </label>
  );
}

function SpinBox({ id, value }: { id: string; value: string }) {
  return (
    <div className="flex h-5 w-[82px] border border-[#7a7a7a] bg-white">
      <input id={id} defaultValue={value} className="w-0 flex-1 bg-transparent pt-0.5 pl-[3px] outline-none" />
      <div className="m-px flex w-[14px] flex-col">
        {['M0 4h8L4 0z', 'M0 0h8L4 4z'].map((d, i) => (
          <button key={d} aria-label={i === 0 ? 'Increase' : 'Decrease'} className="flex flex-1 items-center justify-center border border-[#adadad] bg-[#f0f0f0]">
            <svg viewBox="0 0 8 4" className="h-[3px] w-[6px]" aria-hidden="true">
              <path d={d} fill="#000" />
            </svg>
          </button>
        ))}
      </div>
    </div>
  );
}

function StatusBar() {
  return (
    <footer className="flex h-[27px] shrink-0 items-center pt-px pr-[6px] pl-1">
      <label className="flex h-5 w-[200px] items-center border border-[#7a7a7a] bg-white pl-2">
        <svg viewBox="0 0 12 12" className="size-3" fill="none" aria-hidden="true">
          <circle cx="4.500" cy="4.500" r="3.700" stroke="#9a9a9a" strokeWidth="1.400" />
          <path d="M7.500 7.500L11.500 11.500" stroke="#9a9a9a" strokeWidth="1.600" />
        </svg>
        <input aria-label="Locator" placeholder="Type to locate (Ctrl+K)" className="ml-[7px] w-0 flex-1 bg-transparent pt-0.5 outline-none placeholder:text-[#808080]" />
      </label>
      <span className="ml-[7px] pt-0.5">Ready</span>
      <div className="ml-auto flex items-center">
        <label htmlFor="coordinate" className="pt-0.5">Coordinate</label>
        <input id="coordinate" defaultValue="-1748090,9038273" className="ml-1 h-5 w-[102px] border border-[#7a7a7a] bg-white pt-0.5 pl-[3px] outline-none" />
        <button aria-label="Toggle extents" className="mx-[3px]"><Icon name="mouse" className="size-4" /></button>
        <label htmlFor="scale" className="ml-2 pt-0.5">Scale</label>
        <div className="relative ml-1 h-5 w-[84px]">
          <select id="scale" defaultValue="s" className="h-5 w-full appearance-none border border-[#7a7a7a] bg-white pt-0.5 pl-[2px] outline-none">
            <option value="s">:28 196 830</option>
          </select>
          <svg viewBox="0 0 8 5" className="pointer-events-none absolute top-[8px] right-[4px] h-[5px] w-2" fill="none" aria-hidden="true">
            <path d="M.5.5L4 4 7.500.5" stroke="#444" strokeWidth="1.100" />
          </svg>
        </div>
        <button aria-label="Lock scale" className="ml-1"><Icon name="lock" className="size-[15px]" /></button>
        <label htmlFor="magnifier" className="mr-[3px] ml-[10px] pt-0.5">Magnifier</label>
        <SpinBox id="magnifier" value="100%" />
        <label htmlFor="rotation" className="mr-[10px] ml-2 pt-0.5">Rotation</label>
        <SpinBox id="rotation" value="0.0 °" />
        <div className="ml-[5px]"><CheckBox label="Render" /></div>
        <button className="ml-[18px] flex items-center gap-[3px]">
          <Icon name="crs" className="size-4" />
          <span className="pt-0.5">EPSG:3857</span>
        </button>
        <button aria-label="Messages" className="ml-[13px]"><Icon name="bubble" className="size-[18px]" /></button>
      </div>
    </footer>
  );
}

/* ---------- page ---------- */

const menus = ['Project', 'Edit', 'View', 'Layer', 'Settings', 'Plugins', 'Vector', 'Raster', 'Database', 'Web', 'Processing', 'Help'];

export default function App() {
  return (
    <div className={`relative flex h-screen flex-col overflow-hidden bg-[#f0f0f0] text-[11px] leading-4 text-black ${uiFont}`}>
      <header className={`flex h-6 shrink-0 items-center bg-white pl-[2px] ${menuFont}`}>
        <Icon name="qgis" className="size-4" />
        <h1 className="ml-1 flex-1 text-[12px]">QGIS</h1>
        <div className="flex h-[22px]">
          <button aria-label="Minimize" className="flex w-[46px] items-center justify-center">
            <svg viewBox="0 0 10 10" className="size-[10px]"><path d="M0 5.500h10" stroke="#000" /></svg>
          </button>
          <button aria-label="Restore" className="flex w-[45px] items-center justify-center">
            <svg viewBox="0 0 10 10" className="size-[10px]" fill="none"><path d="M.5 2.500h7v7h-7zM2.500 2.500v-2h7v7h-2" stroke="#000" /></svg>
          </button>
          <button aria-label="Close" className="flex w-[48px] items-center justify-center">
            <svg viewBox="0 0 10 10" className="size-[10px]"><path d="M0 0l10 10M10 0L0 10" stroke="#000" /></svg>
          </button>
        </div>
      </header>
      <nav className={`flex h-[18px] shrink-0 items-center gap-[14px] bg-white pl-[7px] ${menuFont}`}>
        {menus.map((m) => (
          <button key={m}>{m}</button>
        ))}
      </nav>

      <div className="flex h-[35px] shrink-0 border-b border-[#b4b4b4]">
        <ToolGroup tools={fileTools} />
        <ToolGroup tools={navTools} />
        <ToolGroup tools={attributeTools} />
      </div>
      <div className="flex h-[33px] shrink-0 border-b border-[#b4b4b4]">
        <ToolGroup tools={createTools} />
        <ToolGroup tools={editTools} />
        <ToolGroup tools={labelTools} />
        <ToolGroup tools={[{ id: 'metasearch', label: 'MetaSearch' }]} />
        <ToolGroup tools={[{ id: 'console', label: 'Python Console' }]} />
        <ToolGroup tools={[{ id: 'help', label: 'Help Contents' }]} />
        <span className="my-auto ml-1 h-[26px] w-[2px] border-r-2 border-dotted border-[#b4b4b4]" />
      </div>

      <div className="flex min-h-0 flex-1">
        <div role="toolbar" className="flex w-[47px] shrink-0 flex-col border-b border-[#b4b4b4] pl-[2px]">
          <span className="mt-1 mb-[3px] h-[2px] w-[40px] border-t-2 border-dotted border-[#b4b4b4]" />
          {sourceTools.map((t) => (
            <div key={t.label} className="flex h-[30px] items-center gap-px">
              <button aria-label={t.label} className="flex h-[30px] w-[31px] items-center justify-center pr-px">
                <Icon name={t.id} />
              </button>
              {t.menu && <Caret />}
            </div>
          ))}
        </div>

        <div className="flex w-[203px] shrink-0 flex-col">
          <section className="flex h-[329px] shrink-0 flex-col pt-px">
            <DockTitle title="Browser" />
            <DockTools
              tools={[
                { id: 'addLayer', label: 'Add Layer' },
                { id: 'refresh', label: 'Refresh Browser' },
                { id: 'funnel', label: 'Filter Browser' },
                { id: 'collapse', label: 'Collapse All' },
                { id: 'info', label: 'Properties Widget' },
              ]}
            />
            <ul className="flex-1 overflow-hidden border border-[#828790] bg-white pt-px pl-[2px]">
              {browserNodes.map((n) => (
                <TreeRow key={n.label} node={n} />
              ))}
            </ul>
          </section>
          <section className="mt-[5px] flex min-h-0 flex-1 flex-col">
            <DockTitle title="Layers" />
            <div className="flex items-center">
              <DockTools
                tools={[
                  { id: 'brush', label: 'Layer Styling' },
                  { id: 'group', label: 'Add Group' },
                  { id: 'eye', label: 'Manage Map Themes' },
                  { id: 'funnel', label: 'Filter Legend' },
                  { id: 'epsilon', label: 'Filter by Expression' },
                ]}
              />
              <Caret />
            </div>
            <ul className="flex-1 overflow-hidden border border-[#828790] bg-white pt-px pl-[21px]">
              <li className="flex h-5 items-center gap-1 bg-[#cce8ff] pl-[2px]">
                <CheckBox label="allomasok visibility" hideLabel />
                <span className="flex h-5 flex-1 items-center border border-dotted border-black pl-1">
                  <svg viewBox="0 0 8 8" className="size-2" aria-hidden="true">
                    <circle cx="4" cy="4" r="3.200" fill="#4f8a78" />
                  </svg>
                  <span className="ml-[10px] font-bold underline">allomasok</span>
                </span>
              </li>
            </ul>
          </section>
        </div>

        <div className="w-1 shrink-0" />
        <MapCanvas />
        <div className="w-1 shrink-0" />

        <section className="flex w-[159px] shrink-0 flex-col pt-px">
          <DockTitle title="Processing Toolbox" />
          <DockTools
            tools={[
              { id: 'gears', label: 'Model tools' },
              { id: 'python', label: 'Script tools' },
              { id: 'clock', label: 'History' },
              { id: 'doc', label: 'Results' },
              { id: 'wrench', label: 'Options' },
            ]}
          />
          <div className="flex h-5 shrink-0 items-center border border-b-0 border-[#828790] bg-white pr-[7px] pl-px">
            <input aria-label="Search algorithms" placeholder="Search..." className="w-0 flex-1 bg-transparent pt-0.5 outline-none placeholder:text-[#808080]" />
            <button aria-label="Clear search">
              <svg viewBox="0 0 13 10" className="h-[10px] w-[13px]" fill="none" aria-hidden="true">
                <path d="M4 0h9v10H4L0 5z" fill="#8c8c8c" />
                <path d="M5.500 2.500l5 5M10.500 2.500l-5 5" stroke="#fff" strokeWidth="1.300" />
              </svg>
            </button>
          </div>
          <ul className="flex-1 overflow-hidden border border-[#828790] bg-white pl-px">
            <li>
              <div className="flex h-4 items-center pl-[3px]">
                <button aria-label="Collapse Recently used"><Chevron open /></button>
                <span className="ml-2 pt-0.5">Recently used</span>
              </div>
              <ul>
                {['Merge vector la...', 'Fix geometries'].map((label) => (
                  <li key={label} className="flex h-5 items-center pl-[42px] whitespace-nowrap">
                    <Svg className="size-4"><Gear r={7.500} fill="#7ba6d8" stroke="#6a97cb" hole="#fff" /></Svg>
                    <span className="ml-[5px] pt-0.5">{label}</span>
                  </li>
                ))}
              </ul>
            </li>
            {toolboxNodes.map((n) => (
              <TreeRow key={n.label} node={{ ...n }} />
            ))}
          </ul>
        </section>
      </div>

      <StatusBar />
      <ContextMenu />
    </div>
  );
}
